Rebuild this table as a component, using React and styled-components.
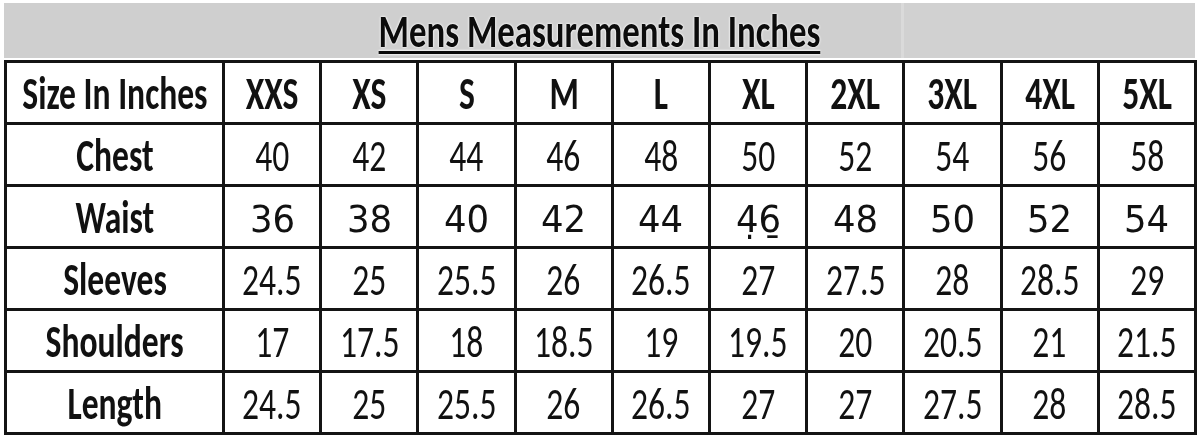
import { Fragment } from "react";
import styled, { createGlobalStyle } from "styled-components";

const Global = createGlobalStyle`
  body {
    margin: 0;
    background: #fff;
    font-family: "Carlito", "Liberation Sans", sans-serif;
    color: #111;
  }
`;

const Page = styled.div`
  width: 1200px;
  height: 438px;
  padding: 3px 0 0 4px;
  box-sizing: border-box;
  display: flex;
  flex-direction: column;
  gap: 2px;
`;

const Banner = styled.div`
  width: 1191px;
  height: 55px;
  display: flex;
  align-items: center;
  justify-content: center;
  background: linear-gradient(
    to right,
    #cfcfcf 897px,
    #dadada 897px,
    #dadada 900px,
    #d1d1d1 900px
  );
`;

const Title = styled.h1`
  margin: 2px 0 0;
  font-size: 47px;
  font-weight: 700;
  line-height: 1;
  color: #0c0c0c;
  text-decoration: underline;
  text-decoration-thickness: 3px;
  text-underline-offset: 4px;
  text-shadow: 0 0 3px #fff, 0 0 2px #fff;
  transform: scaleX(0.74);
  white-space: nowrap;
`;

const Grid = styled.div`
  width: 1193px;
  box-sizing: border-box;
  display: grid;
  grid-template-columns: 215px repeat(10, 1fr);
  grid-auto-rows: 59px;
  gap: 3px;
  padding: 3px;
  background: #141414;
`;

const Cell = styled.div`
  background: #fff;
  display: flex;
  align-items: center;
  justify-content: center;
  overflow: hidden;
`;

const Text = styled.span`
  display: inline-block;
  white-space: nowrap;
  line-height: 1;
  font-family: ${p => (p.alt ? '"DejaVu Sans", sans-serif' : '"Carlito", "Liberation Sans", sans-serif')};
  font-size: ${p => (p.alt ? "37px" : "46px")};
  font-weight: ${p => (p.bold ? 700 : 400)};
  transform: ${p => (p.alt ? "scaleX(0.96)" : "scaleX(0.73)")};
  margin-top: ${p => (p.alt ? "6px" : "0")};
`;

const sizes = ["XXS", "XS", "S", "M", "L", "XL", "2XL", "3XL", "4XL", "5XL"];

const rows = [
  { label: "Chest", values: ["40", "42", "44", "46", "48", "50", "52", "54", "56", "58"] },
  { label: "Waist", alt: true, values: ["36", "38", "40", "42", "44", "4\u03236\u0331", "48", "50", "52", "54"] },
  { label: "Sleeves", values: ["24.5", "25", "25.5", "26", "26.5", "27", "27.5", "28", "28.5", "29"] },
  { label: "Shoulders", values: ["17", "17.5", "18", "18.5", "19", "19.5", "20", "20.5", "21", "21.5"] },
  { label: "Length", values: ["24.5", "25", "25.5", "26", "26.5", "27", "27", "27.5", "28", "28.5"] },
];

export default function App() {
  return (
    <>
      <Global />
      <Page>
        <Banner>
          <Title>Mens Measurements In Inches</Title>
        </Banner>
        <Grid>
          <Cell>
            <Text bold>Size In Inches</Text>
          </Cell>
          {sizes.map(s => (
            <Cell key={s}>
              <Text bold>{s}</Text>
            </Cell>
          ))}
          {rows.map(row => (
            <Fragment key={row.label}>
              <Cell>
                <Text bold>{row.label}</Text>
              </Cell>
              {row.values.map((v, i) => (
                <Cell key={row.label + i}>
                  <Text alt={row.alt}>{v}</Text>
                </Cell>
              ))}
            </Fragment>
          ))}
        </Grid>
      </Page>
    </>
  );
}
